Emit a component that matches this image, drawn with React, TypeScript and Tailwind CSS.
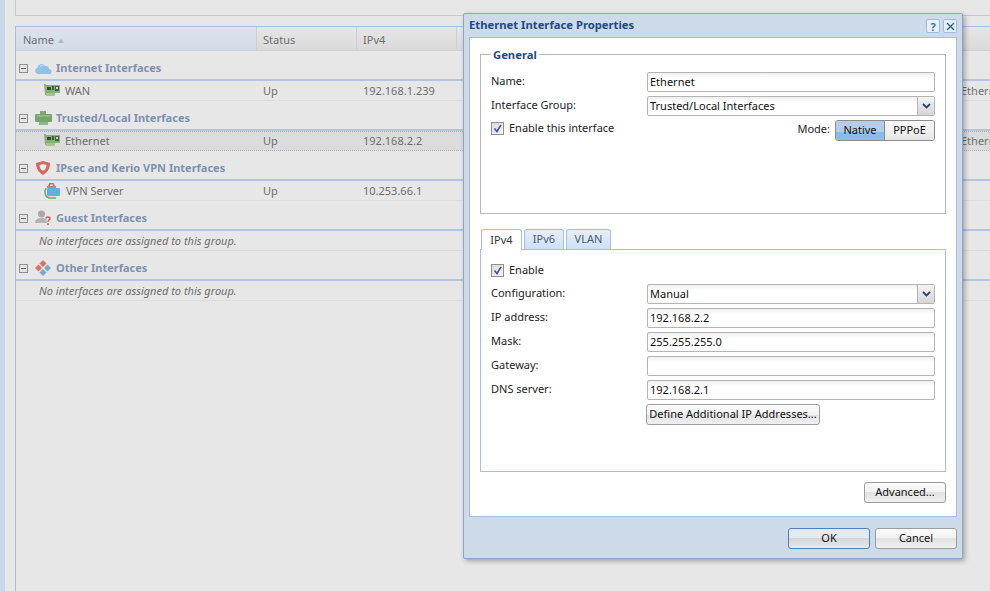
import type { ReactNode } from 'react';

const font = "font-['Noto_Sans',sans-serif]";

function NicIcon() {
  return (
    <svg width="16" height="14" viewBox="0 0 16 14" className="shrink-0">
      <path d="M0 0h2v11H1z" fill="#9aa58f" />
      <rect x="2" y="1" width="14" height="8" fill="#7fb56f" />
      <rect x="2" y="9" width="9" height="3" fill="#a5c48f" />
      <rect x="3" y="3" width="4" height="3" fill="#3d4a3a" />
      <rect x="8" y="2" width="2" height="4" fill="#46604a" />
      <rect x="11" y="2" width="4" height="5" fill="#4c5a4c" />
      <rect x="12" y="3" width="2" height="2" fill="#c9dcc2" />
    </svg>
  );
}

function CloudIcon() {
  return (
    <svg width="17" height="13" viewBox="0 0 17 13" className="shrink-0">
      <path d="M3 12a3 3 0 0 1-.6-5.900A4.500 4.500 0 0 1 10.600 4 3.200 3.200 0 0 1 14 7a2.600 2.600 0 0 1 1 5z" fill="#8fc3e4" />
      <path d="M5 5a3 3 0 0 1 5-1" stroke="#c5e2f3" fill="none" />
    </svg>
  );
}

function LanIcon() {
  return (
    <svg width="17" height="15" viewBox="0 0 17 15" className="shrink-0">
      <rect x="5" y="0" width="6" height="4" fill="#7fa878" />
      <rect x="0" y="3" width="17" height="8" rx="1" fill="#76a66e" />
      <rect x="4" y="11" width="9" height="3" fill="#8fb688" />
      <path d="M2 5h13" stroke="#a3c79c" />
    </svg>
  );
}

function ShieldIcon() {
  return (
    <svg width="16" height="16" viewBox="0 0 16 16" className="shrink-0">
      <path d="M1 3l7-2 7 2c0 5-2 9-7 12C3 12 1 8 1 3z" fill="#d9665a" />
      <path d="M4.500 5l3.500-1 3.500 1c0 2.500-1 4.500-3.500 6C5.500 9.500 4.500 7.500 4.500 5z" fill="#ececec" />
    </svg>
  );
}

function VpnIcon() {
  return (
    <svg width="17" height="16" viewBox="0 0 17 16" className="shrink-0">
      <path d="M5 4V2.500A2.500 2 0 0 1 10 2.500V4" stroke="#c8675c" strokeWidth="1.500" fill="none" />
      <rect x="3" y="3" width="9" height="2" fill="#d27c70" />
      <rect x="3" y="5" width="13" height="8" rx="1" fill="#5fb0dc" />
      <path d="M2 5C0 9 1 14 5 15h7" stroke="#6fa96a" strokeWidth="1.500" fill="none" />
    </svg>
  );
}

function GuestIcon() {
  return (
    <svg width="17" height="16" viewBox="0 0 17 16" className="shrink-0">
      <circle cx="6.500" cy="4" r="3.500" fill="#a9a9a9" />
      <path d="M0 13c0-4 3-5 6.500-5S12 9 12 13z" fill="#b3b3b3" />
      <path d="M11 8.500c0-2 4-2 4 0 0 1.500-2 1.500-2 3.500" stroke="#d5625a" strokeWidth="1.500" fill="none" />
      <rect x="12.200" y="13" width="1.600" height="2" fill="#d5625a" />
    </svg>
  );
}

function OtherIcon() {
  return (
    <svg width="16" height="16" viewBox="0 0 16 16" className="shrink-0">
      <path d="M8 0l3.500 3.500L8 7 4.500 3.500z" fill="#d8736b" />
      <path d="M3.500 4.500L7 8l-3.500 3.500L0 8z" fill="#d8736b" />
      <path d="M12.500 4.500L16 8l-3.500 3.500L9 8z" fill="#78a9c8" />
      <path d="M8 9l3.500 3.500L8 16l-3.500-3.500z" fill="#78a9c8" />
    </svg>
  );
}

function Collapse() {
  return (
    <span className="ml-[3px] mr-[7px] flex h-[9px] w-[9px] shrink-0 items-center justify-center border border-[#8f8f8f] bg-[#e4e4e4]">
      <span className="h-px w-[5px] bg-[#666]" />
    </span>
  );
}

function GroupRow({ icon, title }: { icon: ReactNode; title: string }) {
  return (
    <div className="flex h-[30px] items-center border-b-2 border-[#b3c6dd] pt-[6px]">
      <Collapse />
      <span className="flex w-[20px] justify-start">{icon}</span>
      <span className="ml-[1px] text-[11px] font-bold text-[#7f91b2]">{title}</span>
    </div>
  );
}

function ItemRow({
  icon,
  name,
  ip,
  selected,
  extra,
}: {
  icon: ReactNode;
  name: string;
  ip: string;
  selected?: boolean;
  extra?: string;
}) {
  return (
    <div
      className={
        selected
          ? 'grid h-[20px] grid-cols-[241px_100px_598px_60px] items-center border-y border-dotted border-[#b0b0b0] bg-[#dcdcdc] text-[11px] text-[#6e6e6e]'
          : 'grid h-[20px] grid-cols-[241px_100px_598px_60px] items-center border-b border-[#dcdcdc] text-[11px] text-[#6e6e6e]'
      }
    >
      <span className="flex items-center gap-[5px] pl-[28px]">
        {icon}
        <span className="pt-[1px]">{name}</span>
      </span>
      <span className="pl-[6px] pt-[1px]">Up</span>
      <span className="pl-[6px] pt-[1px]">{ip}</span>
      <span className="pl-[6px] pt-[1px]">{extra}</span>
    </div>
  );
}

function EmptyRow() {
  return (
    <div className="flex h-[20px] items-center border-b border-[#dcdcdc] pl-[23px] pt-[1px] text-[11px] italic text-[#6e6e6e]">
      No interfaces are assigned to this group.
    </div>
  );
}

function HeaderCell({ label, width, active }: { label: string; width: string; active?: boolean }) {
  return (
    <div
      className={
        active
          ? `flex h-full items-center gap-[4px] border-r border-[#d0d0d0] bg-gradient-to-b from-[#dde3ea] to-[#d2dce8] pl-[7px] pt-[3px] ${width}`
          : `flex h-full items-center border-r border-[#d0d0d0] bg-gradient-to-b from-[#e6e6e6] to-[#dadada] pl-[6px] pt-[3px] ${width}`
      }
    >
      {label}
      {active && <span className="mt-[1px] h-0 w-0 border-x-[3px] border-b-[4px] border-x-transparent border-b-[#a9b8ca]" />}
    </div>
  );
}

function Field({ label, value, select }: { label: string; value: string; select?: boolean }) {
  return (
    <div className="flex h-[20px] items-center">
      <span className="w-[156px] shrink-0 pb-[1px] text-[11px] text-[#222]">{label}</span>
      <div className="flex h-[20px] w-[288px] overflow-hidden rounded-[2px] border border-[#b4b4b4] bg-gradient-to-b from-[#efefef] to-white to-30%">
        <span className="flex-1 pl-[2px] text-[11px] leading-[17px] text-[#111]">{value}</span>
        {select && (
          <span className="flex w-[17px] items-center justify-center border-l border-[#b4b4b4] bg-gradient-to-b from-[#f3f3f3] to-[#d5d5d5]">
            <svg width="9" height="6" viewBox="0 0 9 6">
              <path d="M1 1l3.500 3.500L8 1" stroke="#22477a" strokeWidth="1.800" fill="none" />
            </svg>
          </span>
        )}
      </div>
    </div>
  );
}

function Check({ label }: { label: string }) {
  return (
    <div className="flex items-center gap-[5px] text-[11px] text-[#222]">
      <span className="flex h-[13px] w-[13px] items-center justify-center border border-[#8e8e8e] bg-gradient-to-br from-[#d9d9d9] to-[#f7f7f7]">
        <svg width="9" height="9" viewBox="0 0 9 9">
          <path d="M1.500 4.500L4 7.500 8 0.800" stroke="#3b55a5" strokeWidth="1.600" fill="none" />
        </svg>
      </span>
      {label}
    </div>
  );
}

function Button({ label, width, primary }: { label: string; width: string; primary?: boolean }) {
  return (
    <button
      type="button"
      className={
        primary
          ? `h-[21px] rounded-[3px] border border-[#4f7fb5] bg-[linear-gradient(#e4eaf1_0%,#e4eaf1_50%,#d4d6d8_50%,#e6e8ea_100%)] text-[11px] text-[#111] ${width}`
          : `h-[21px] rounded-[3px] border border-[#9c9c9c] bg-[linear-gradient(#fbfbfb_0%,#f2f2f2_50%,#e2e2e2_50%,#f0f0f0_100%)] text-[11px] text-[#111] ${width}`
      }
    >
      {label}
    </button>
  );
}

function Tab({ label, width, active }: { label: string; width: string; active?: boolean }) {
  return (
    <div
      className={
        active
          ? `relative z-10 -mb-px flex h-[21px] items-center justify-center rounded-t-[3px] border border-b-0 border-[#a5bfdc] bg-white text-[11px] text-[#333] ${width}`
          : `flex h-[20px] items-center justify-center rounded-t-[3px] border border-b-0 border-[#a5bfdc] bg-gradient-to-b from-[#e6effa] to-[#cfe0f5] text-[11px] text-[#4a5a70] ${width}`
      }
    >
      {label}
    </div>
  );
}

function Dialog() {
  return (
    <div className="absolute left-[463px] top-[13px] flex h-[546px] w-[500px] flex-col rounded-[2px] border border-[#8ea6c4] bg-[#cddaea] px-[5px] shadow-[2px_2px_5px_rgba(0,0,0,0.3)]">
      <div className="flex h-[23px] shrink-0 items-center justify-between">
        <span className="text-[11.250px] font-bold text-[#1d4a86]">Ethernet Interface Properties</span>
        <div className="flex gap-[3px] pt-[1px]">
          <span className="flex h-[14px] w-[14px] items-center justify-center rounded-[2px] border border-[#a3bbd6] bg-[#e6f0fa] text-[11px] font-bold leading-none text-[#3c70ac]">?</span>
          <span className="flex h-[14px] w-[14px] items-center justify-center rounded-[2px] border border-[#a3bbd6] bg-[#e6f0fa]">
            <svg width="9" height="9" viewBox="0 0 9 9">
              <path d="M1 1l7 7M8 1l-7 7" stroke="#2c5b92" strokeWidth="1.300" />
            </svg>
          </span>
        </div>
      </div>

      <div className="flex h-[480px] shrink-0 flex-col border border-[#a8bfdc] bg-white px-[10px]">
        {/* General */}
        <div className="relative mt-[16px] flex h-[160px] shrink-0 flex-col border border-[#b8b8b8] px-[10px] pt-[17px]">
          <span className="absolute left-[10px] top-[-8px] bg-white px-[2px] text-[11.250px] font-bold leading-[16px] text-[#1d4a86]">General</span>
          <div className="flex flex-col gap-[4px]">
            <Field label="Name:" value="Ethernet" />
            <Field label="Interface Group:" value="Trusted/Local Interfaces" select />
          </div>
          <div className="mt-[3px] flex h-[22px] items-center justify-between">
            <div className="pb-[3px]">
              <Check label="Enable this interface" />
            </div>
            <div className="flex items-center gap-[5px]">
              <span className="pb-[1px] text-[11px] text-[#222]">Mode:</span>
              <div className="flex h-[21px] w-[100px] overflow-hidden rounded-[3px] border border-[#8b8b8b] text-[11px] text-[#111]">
                <span className="flex w-[49px] items-center justify-center border-r border-[#8b8b8b] bg-[linear-gradient(#b5cde8_0%,#b5cde8_60%,#8cbdea_60%,#8cbdea_100%)]">Native</span>
                <span className="flex flex-1 items-center justify-center bg-[linear-gradient(#f8f8f8_0%,#f0f0f0_50%,#e4e4e4_100%)]">PPPoE</span>
              </div>
            </div>
          </div>
        </div>

        {/* Tabs */}
        <div className="mt-[15px] flex gap-[2px] pl-[1px]">
          <Tab label="IPv4" width="w-[41px]" active />
          <Tab label="IPv6" width="w-[40px]" />
          <Tab label="VLAN" width="w-[45px]" />
        </div>
        <div className="flex h-[223px] shrink-0 flex-col border border-[#a5bfdc] px-[10px] pt-[12px]">
          <Check label="Enable" />
          <div className="mt-[5px] flex flex-col gap-[4px]">
            <Field label="Configuration:" value="Manual" select />
            <Field label="IP address:" value="192.168.2.2" />
            <Field label="Mask:" value="255.255.255.0" />
            <Field label="Gateway:" value="" />
            <Field label="DNS server:" value="192.168.2.1" />
          </div>
          <div className="mt-[4px] flex pl-[155px]">
            <Button label="Define Additional IP Addresses..." width="w-[174px]" />
          </div>
        </div>
        <div className="mt-[10px] flex justify-end">
          <Button label="Advanced..." width="w-[82px]" />
        </div>
      </div>

      <div className="flex flex-1 items-start justify-end gap-[5px] pt-[11px]">
        <Button label="OK" width="w-[82px]" primary />
        <Button label="Cancel" width="w-[82px]" />
      </div>
    </div>
  );
}

export default function App() {
  return (
    <div className={`relative flex h-[591px] w-[990px] overflow-hidden bg-[#e7e7e7] ${font}`}>
      <div className="w-[5px] shrink-0 bg-[#c9d7ea]" />
      <div className="ml-[10px] flex flex-1 flex-col">
        <div className="h-[16px] shrink-0 border-b border-l border-[#c8c8c8]" />
        <div className="mt-[10px] flex flex-col border-l border-t border-[#a9bfd9]">
          <div className="flex h-[24px] border-b border-[#d0d0d0] text-[11px] text-[#6e6e6e]">
            <HeaderCell label="Name" width="w-[241px]" active />
            <HeaderCell label="Status" width="w-[100px]" />
            <HeaderCell label="IPv4" width="w-[100px]" />
            <HeaderCell label="" width="flex-1" />
          </div>
          <GroupRow icon={<CloudIcon />} title="Internet Interfaces" />
          <ItemRow icon={<NicIcon />} name="WAN" ip="192.168.1.239" extra="Ethernet" />
          <GroupRow icon={<LanIcon />} title="Trusted/Local Interfaces" />
          <ItemRow icon={<NicIcon />} name="Ethernet" ip="192.168.2.2" extra="Ethernet" selected />
          <GroupRow icon={<ShieldIcon />} title="IPsec and Kerio VPN Interfaces" />
          <ItemRow icon={<VpnIcon />} name="VPN Server" ip="10.253.66.1" />
          <GroupRow icon={<GuestIcon />} title="Guest Interfaces" />
          <EmptyRow />
          <GroupRow icon={<OtherIcon />} title="Other Interfaces" />
          <EmptyRow />
        </div>
        <div className="flex-1 border-l border-[#a9bfd9]" />
      </div>
      <Dialog />
    </div>
  );
}
